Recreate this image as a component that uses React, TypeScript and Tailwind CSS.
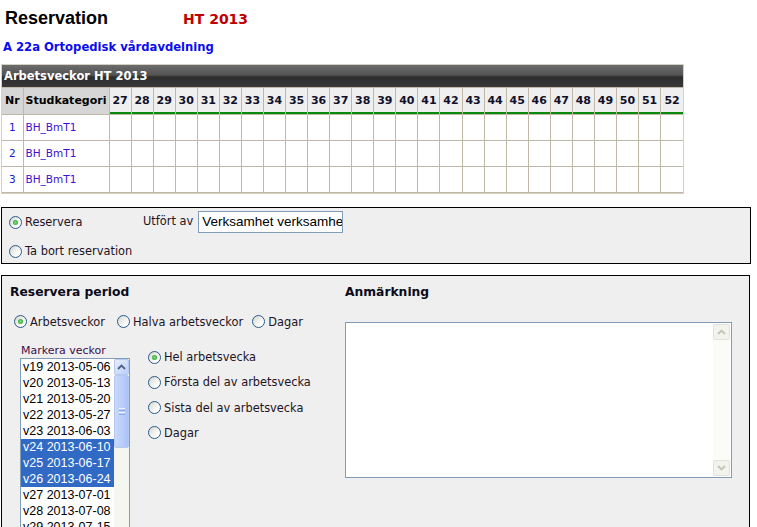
import React from "react";

const weeks = Array.from({ length: 26 }, (_, i) => 27 + i);
const listItems = [
  "v19 2013-05-06",
  "v20 2013-05-13",
  "v21 2013-05-20",
  "v22 2013-05-27",
  "v23 2013-06-03",
  "v24 2013-06-10",
  "v25 2013-06-17",
  "v26 2013-06-24",
  "v27 2013-07-01",
  "v28 2013-07-08",
  "v29 2013-07-15",
];

function Radio({ checked }: { checked?: boolean }) {
  return (
    <span className="inline-flex w-[13px] h-[13px] shrink-0 items-center justify-center rounded-full border border-[#2a5a8a] bg-[linear-gradient(135deg,#d6d6ce,#ffffff_75%)]">
      {checked && (
        <span className="w-[5px] h-[5px] rounded-full bg-[radial-gradient(circle,#7be07b,#1f9a1f)]" />
      )}
    </span>
  );
}

function RadioLabel({ checked, label, className = "" }: { checked?: boolean; label: string; className?: string }) {
  return (
    <span className={"inline-flex items-center gap-[3px] " + className}>
      <Radio checked={checked} />
      <span className="text-[11.4px] leading-[14px] whitespace-nowrap">{label}</span>
    </span>
  );
}

function ChevronUp({ color }: { color: string }) {
  return (
    <svg width="9" height="6" viewBox="0 0 9 6">
      <path d="M1 5 L4.5 1.5 L8 5" fill="none" stroke={color} strokeWidth="1.8" />
    </svg>
  );
}
function ChevronDown({ color }: { color: string }) {
  return (
    <svg width="9" height="6" viewBox="0 0 9 6">
      <path d="M1 1 L4.5 4.5 L8 1" fill="none" stroke={color} strokeWidth="1.8" />
    </svg>
  );
}

export default function App() {
  return (
    <div className="w-[757px] h-[527px] overflow-hidden bg-white text-[#1e1424] font-['DejaVu_Sans',sans-serif]">
      {/* Title */}
      <div className="flex items-baseline pl-[5px] pt-[8px] h-[28px]">
        <span className="w-[178px] font-['Liberation_Sans',sans-serif] font-bold text-[18px] leading-[21px] text-black">
          Reservation
        </span>
        <span className="font-bold text-[14px] text-[#c00000]">HT 2013</span>
      </div>
      <div className="pl-[3px] mt-[12px] text-[11.6px] leading-[14px] font-bold text-[#0c0cf0]">
        A 22a Ortopedisk vårdavdelning
      </div>

      {/* Week table */}
      <div className="mt-[10px] ml-[1px] w-[683px] border border-[#d4d0c2] bg-white">
        <div className="h-[22px] bg-[linear-gradient(#6c6c6c,#545454_45%,#2c2c2c_55%,#383838)] text-white font-bold text-[11.5px] leading-[22px] pl-[2px]">
          Arbetsveckor HT 2013
        </div>
        <table className="w-full table-fixed border-collapse">
          <colgroup>
            <col className="w-[21px]" />
            <col className="w-[86px]" />
            {weeks.map((w) => (
              <col key={w} />
            ))}
          </colgroup>
          <thead>
            <tr className="h-[27px]">
              <th className="bg-[#d6d6d6] border border-[#bdb9a6] border-l-0 text-[11px] font-bold text-black p-0">Nr</th>
              <th className="bg-[#d6d6d6] border border-[#bdb9a6] text-[11px] font-bold text-black text-left pl-[2px] p-0 whitespace-nowrap overflow-hidden">
                Studkategori
              </th>
              {weeks.map((w) => (
                <th
                  key={w}
                  className="bg-[#efefef] border border-[#bdb9a6] last:border-r-0 text-[11px] font-bold text-[#10102a] p-0 shadow-[inset_0_-2px_0_#0a8a0a]"
                >
                  {w}
                </th>
              ))}
            </tr>
          </thead>
          <tbody>
            {[1, 2, 3].map((n) => (
              <tr key={n} className="h-[26px]">
                <td className="border border-[#bdb9a6] border-l-0 text-center text-[10.5px] text-[#1818d0] p-0">{n}</td>
                <td className="border border-[#bdb9a6] text-[10.5px] text-[#3a10d8] pl-[2px] p-0">BH_BmT1</td>
                {weeks.map((w) => (
                  <td key={w} className="border border-[#bdb9a6] last:border-r-0 p-0" />
                ))}
              </tr>
            ))}
          </tbody>
        </table>
      </div>

      {/* Reservera / Ta bort */}
      <div className="mt-[13px] ml-[1px] w-[750px] h-[57px] border border-black bg-[#efefef] pl-[7px] pt-[3px]">
        <div className="flex items-center h-[22px]">
          <RadioLabel checked label="Reservera" className="w-[134px]" />
          <span className="text-[11.4px] whitespace-nowrap">Utfört av</span>
          <div className="ml-[5px] w-[145px] h-[22px] border border-[#7f9db9] bg-white pl-[3px] overflow-hidden whitespace-nowrap font-['Liberation_Sans',sans-serif] text-[13.5px] leading-[20px] text-black">
            Verksamhet verksamhet
          </div>
        </div>
        <div className="flex items-center h-[16px] mt-[10px]">
          <RadioLabel label="Ta bort reservation" />
        </div>
      </div>

      {/* Reservera period */}
      <div className="mt-[11px] ml-[1px] w-[749px] h-[260px] border border-black bg-[#efefef] flex">
        <div className="w-[342px] pt-[9px] pl-[8px]">
          <div className="font-bold text-[12.3px] leading-[15px] text-[#0a0a1a]">Reservera period</div>
          <div className="flex items-center h-[15px] mt-[14px] pl-[4px]">
            <RadioLabel checked label="Arbetsveckor" />
            <RadioLabel label="Halva arbetsveckor" className="ml-[12px]" />
            <RadioLabel label="Dagar" className="ml-[9px]" />
          </div>
          <div className="flex mt-[15px]">
            <div className="ml-[10px] w-[110px]">
              <div className="text-[11px] leading-[14px] text-[#3a1048] pl-[1px] whitespace-nowrap">Markera veckor</div>
              <div className="w-[110px] h-[200px] border border-[#7f9db9] bg-white flex">
                <div className="w-[93px] font-['Liberation_Sans',sans-serif] text-[12.5px] text-black">
                  {listItems.map((t, i) => {
                    const sel = i >= 5 && i <= 7;
                    return (
                      <div
                        key={t}
                        className={
                          sel
                            ? "h-[16px] leading-[16px] pl-[2px] whitespace-nowrap bg-[#316ac5] text-white"
                            : "h-[16px] leading-[16px] pl-[2px] whitespace-nowrap"
                        }
                      >
                        {t}
                      </div>
                    );
                  })}
                </div>
                <div className="w-[15px] bg-[#f6f6f0] flex flex-col">
                  <div className="h-[16px] rounded-[2px] border border-[#b4c8f0] bg-[linear-gradient(135deg,#e6eeff,#bccffb)] flex items-center justify-center">
                    <ChevronUp color="#4d6185" />
                  </div>
                  <div className="h-[73px] rounded-[2px] border border-[#b4c8f0] bg-[linear-gradient(90deg,#c9d8fc,#b8cdfa_60%,#aac2f5)] flex items-center justify-center">
                    <div className="flex flex-col gap-[1px]">
                      <div className="w-[6px] h-[1px] bg-[#eef3fe]" />
                      <div className="w-[6px] h-[1px] bg-[#8caaef]" />
                      <div className="w-[6px] h-[1px] bg-[#eef3fe]" />
                      <div className="w-[6px] h-[1px] bg-[#8caaef]" />
                    </div>
                  </div>
                </div>
              </div>
            </div>
            <div className="ml-[18px] pt-[6px] flex flex-col gap-[11.3px]">
              <RadioLabel checked label="Hel arbetsvecka" />
              <RadioLabel label="Första del av arbetsvecka" />
              <RadioLabel label="Sista del av arbetsvecka" />
              <RadioLabel label="Dagar" />
            </div>
          </div>
        </div>
        <div className="pt-[9px] pl-[1px]">
          <div className="font-bold text-[12.3px] leading-[15px] text-[#0a0a1a]">Anmärkning</div>
          <div className="mt-[22px] w-[387px] h-[156px] border border-[#7f9db9] bg-white flex justify-end p-[1px]">
            <div className="w-[17px] h-full bg-[#fbfbf8] flex flex-col justify-between">
              <div className="h-[16px] rounded-[2px] border border-[#e2e1da] bg-[#f3f3ee] flex items-center justify-center">
                <ChevronUp color="#c5c3b8" />
              </div>
              <div className="h-[16px] rounded-[2px] border border-[#e2e1da] bg-[#f3f3ee] flex items-center justify-center">
                <ChevronDown color="#c5c3b8" />
              </div>
            </div>
          </div>
        </div>
      </div>
    </div>
  );
}
